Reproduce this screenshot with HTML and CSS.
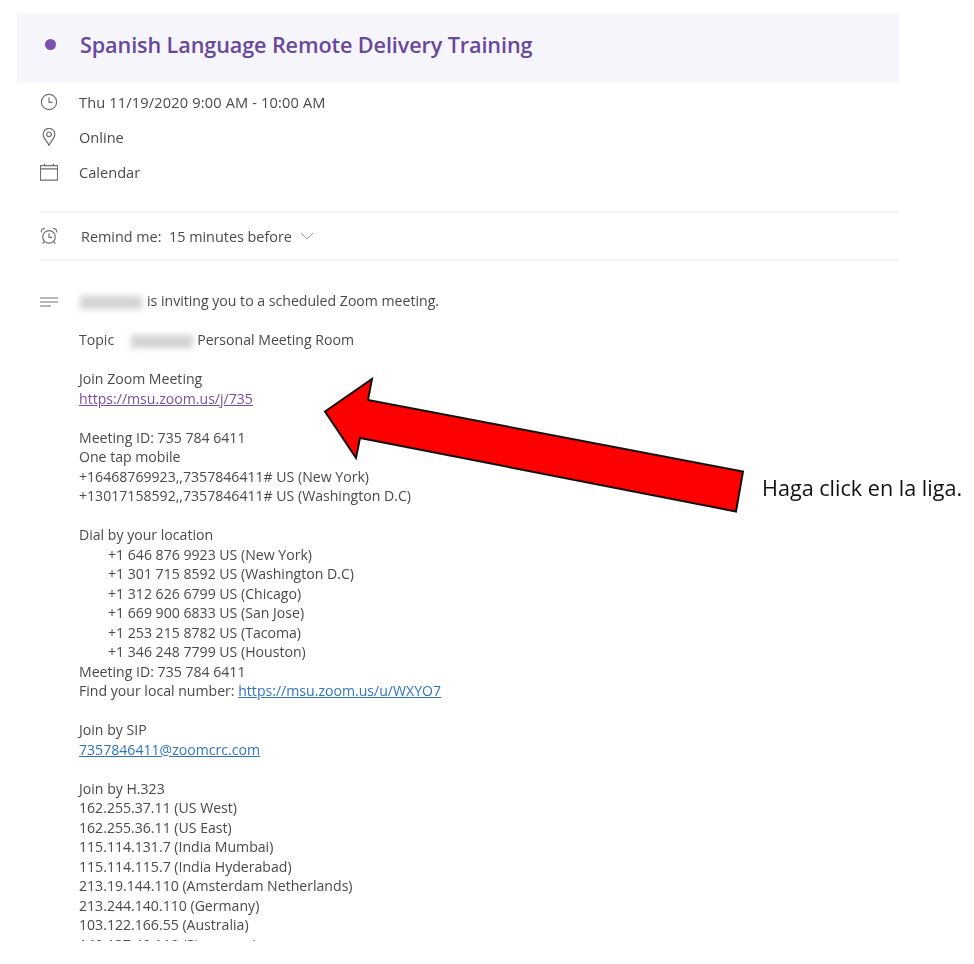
FILE: index.html
```html
<!DOCTYPE html>
<html lang="en">
<head>
<meta charset="utf-8">
<title>Spanish Language Remote Delivery Training</title>
<link rel="stylesheet" href="styles.css">
</head>
<body>
<main class="event">
  <header class="banner">
    <span class="dot"></span>
    <h1 class="title">Spanish Language Remote Delivery Training</h1>
  </header>
  <section class="details">
    <div class="row">
      <svg class="icon" viewBox="0 0 20 20"><circle cx="10" cy="10" r="8.500"/><path d="M10 5v5.500h4"/></svg>
      <span class="date">Thu 11/19/2020 9:00 AM - 10:00 AM</span>
    </div>
    <div class="row">
      <svg class="icon" viewBox="0 0 20 20"><path d="M10 19.500C8.500 15 3.500 12 3.500 7a6.500 6.500 0 0 1 13 0c0 5-5 8-6.500 12.500z"/><circle cx="10" cy="7" r="2.600"/></svg>
      <span>Online</span>
    </div>
    <div class="row">
      <svg class="icon" viewBox="0 0 20 20"><path d="M.5 3h19v16h-19zM.5 6.500h19M5 1v2M15 1v2"/></svg>
      <span>Calendar</span>
    </div>
  </section>
  <section class="reminder">
    <svg class="icon" viewBox="0 0 20 20"><circle cx="10" cy="11" r="7"/><path d="M10 7v4.500h3.500M1.500 6C1 3 3 1.500 5.500 2M18.500 6C19 3 17 1.500 14.500 2M4.500 16.500L3 18.500M15.500 16.500l1.500 2"/></svg>
    <span class="reminder-text">Remind me:&nbsp; 15 minutes before</span>
    <svg class="chevron" viewBox="0 0 14 8"><path d="M1 1l6 6 6-6"/></svg>
  </section>
  <section class="body">
    <svg class="lines" viewBox="0 0 19 10"><path d="M0 1h18M0 5h18M0 9h11"/></svg>
    <div class="message">
      <p class="para"><span class="blur blur-a"></span>is inviting you to a scheduled Zoom meeting.</p>
      <p class="para">Topic<span class="blur blur-b"></span>Personal Meeting Room</p>
      <p class="para">Join Zoom Meeting<br><a class="visited" href="#">https://msu.zoom.us/j/735</a></p>
      <p class="para">Meeting ID: 735 784 6411<br>One tap mobile<br>+16468769923,,7357846411# US (New York)<br>+13017158592,,7357846411# US (Washington D.C)</p>
      <p class="para">Dial by your location<br>
        <span class="indent">+1 646 876 9923 US (New York)</span><br>
        <span class="indent">+1 301 715 8592 US (Washington D.C)</span><br>
        <span class="indent">+1 312 626 6799 US (Chicago)</span><br>
        <span class="indent">+1 669 900 6833 US (San Jose)</span><br>
        <span class="indent">+1 253 215 8782 US (Tacoma)</span><br>
        <span class="indent">+1 346 248 7799 US (Houston)</span><br>
        Meeting ID: 735 784 6411<br>
        Find your local number: <a href="#">https://msu.zoom.us/u/WXYO7</a></p>
      <p class="para">Join by SIP<br><a href="#">7357846411@zoomcrc.com</a></p>
      <p class="para">Join by H.323<br>162.255.37.11 (US West)<br>162.255.36.11 (US East)<br>115.114.131.7 (India Mumbai)<br>115.114.115.7 (India Hyderabad)<br>213.19.144.110 (Amsterdam Netherlands)<br>213.244.140.110 (Germany)<br>103.122.166.55 (Australia)<br>149.137.40.110 (Singapore)</p>
    </div>
  </section>
</main>
<svg class="arrow" viewBox="0 0 974 964"><path d="M325 411.500L372 379 368 400 743 471.500 736 511.500 360 438 356 458z"/></svg>
<p class="note">Haga click en la liga.</p>
</body>
</html>
```
FILE: styles.css
```css
* { box-sizing: border-box; }
html, body { margin: 0; height: 964px; background: #fff; overflow: hidden; }
body { position: relative; font-family: "Open Sans", "Liberation Sans", sans-serif; }
.event { width: 882px; margin: 13px 0 0 17px; height: 928px; overflow: hidden; font-size: 14.100px; color: #4a4a48; filter: blur(.35px); }
.banner { height: 70px; background: #f7f5fc; display: flex; align-items: center; padding-left: 28px; }
.dot { width: 11px; height: 11px; border-radius: 50%; background: #7b50ad; margin-right: 24px; margin-top: -7px; }
.title { margin: 0 0 6px; font-size: 21.600px; font-weight: 600; color: #67489c; letter-spacing: -.1px; line-height: 28px; }
.details { margin-left: 23px; padding-top: 2px; height: 130px; border-bottom: 2px solid #f2f1f0; font-size: 14.600px; }
.row { height: 34.800px; display: flex; align-items: center; gap: 21px; }
.date { letter-spacing: .15px; }
.icon { width: 18px; height: 18px; fill: none; stroke: #6f6e72; stroke-width: 1.300; flex: none; }
.reminder { margin-left: 23px; height: 48px; display: flex; align-items: center; border-bottom: 2px solid #f2f1f0; font-size: 14.400px; }
.reminder-text { margin-left: 23px; }
.chevron { width: 14px; height: 8px; margin-left: 8px; fill: none; stroke: #9a9a9c; }
.body { display: flex; margin-left: 23px; padding-top: 36px; }
.lines { width: 19px; height: 10px; flex: none; fill: none; stroke: #6f6e72; }
.message { margin: -6px 0 0 20px; line-height: 19.500px; }
.para { margin: 0 0 19.500px; white-space: nowrap; }
.blur { display: inline-block; height: 13px; width: 62px; background: #d2d2d2; filter: blur(3px); vertical-align: middle; }
.blur-a { margin: 0 5px 0 1px; }
.blur-b { margin: 0 4px 0 17px; }
.indent { margin-left: 29px; }
a { color: #2f74c0; }
a.visited { color: #7a4fa8; }
.arrow { position: absolute; left: 0; top: 0; width: 974px; height: 964px; pointer-events: none; }
.arrow path { fill: #fe0000; stroke: #111; stroke-width: 2px; stroke-linejoin: miter; }
.note { position: absolute; left: 762px; top: 474px; margin: 0; font-size: 21.600px; line-height: 28px; color: #111; white-space: nowrap; }
```
